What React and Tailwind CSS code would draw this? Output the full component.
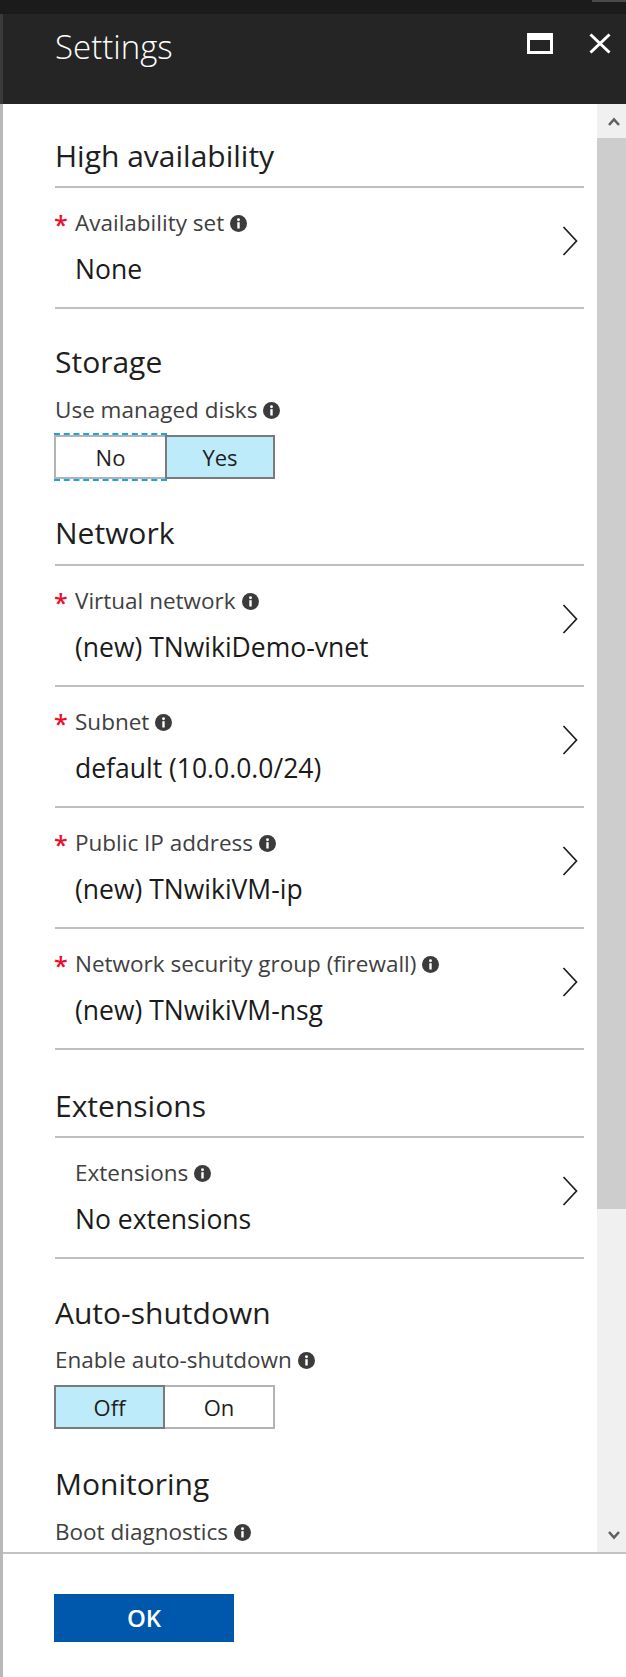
import React from "react";

function Info() {
  return (
    <svg width="17" height="17" viewBox="0 0 17 17" className="shrink-0 ml-[6px]">
      <circle cx="8.5" cy="8.5" r="8.5" fill="#3b3b3b" />
      <rect x="7.3" y="7.2" width="2.4" height="6.3" fill="#fff" />
      <circle cx="8.5" cy="4.7" r="1.45" fill="#fff" />
    </svg>
  );
}

function Chevron() {
  return (
    <svg width="16" height="30" viewBox="0 0 16 30">
      <polyline points="1.5,1 14.5,15 1.5,29" fill="none" stroke="#1e1e1e" strokeWidth="1.7" />
    </svg>
  );
}

function Line() {
  return <div className="h-[2px] bg-[#bfbfbf]" />;
}

function Heading({ children, mt }) {
  return (
    <div className={`h-[42px] leading-[42px] text-[30px] text-[#1e1e1e] whitespace-nowrap ${mt}`}>
      {children}
    </div>
  );
}

function Row({ required, label, value }) {
  return (
    <>
      <div className="h-[119px] flex">
        <div className="flex-1 pt-[21px]">
          <div className="flex items-center h-[28px]">
            <span className="w-[21px] -ml-[1px] self-start h-[28px] leading-[30px] text-[25px] font-semibold text-[#e8112d]">
              {required ? "*" : ""}
            </span>
            <span className="text-[22.5px] leading-[28px] text-[#404040] whitespace-nowrap">{label}</span>
            <Info />
          </div>
          <div className="mt-[15px] h-[34px] leading-[34px] pl-[20px] text-[26.5px] text-[#1a1a1a] whitespace-nowrap">
            {value}
          </div>
        </div>
        <div className="pt-[38px] pr-[6px]">
          <Chevron />
        </div>
      </div>
      <Line />
    </>
  );
}

function FieldLabel({ children, mt }) {
  return (
    <div className={`flex items-center h-[28px] ${mt}`}>
      <span className="text-[22.5px] leading-[28px] text-[#404040] whitespace-nowrap">{children}</span>
      <Info />
    </div>
  );
}

function ArrowGlyph({ up }) {
  return (
    <svg width="12" height="9" viewBox="0 0 12 9">
      <polyline
        points={up ? "1,8 6,2.5 11,8" : "1,1 6,6.5 11,1"}
        fill="none"
        stroke="#606060"
        strokeWidth="2.6"
      />
    </svg>
  );
}

export default function App() {
  return (
    <div className="w-[626px] h-[1677px] flex flex-col bg-white font-['Open_Sans',sans-serif] overflow-hidden">
      {/* top strip */}
      <div className="h-[14px] shrink-0 bg-[#1b1b1b] relative">
        <div className="absolute right-0 top-0 w-[34px] h-[2px] bg-[#4a4a4a]" />
      </div>

      {/* header */}
      <div className="h-[90px] shrink-0 flex bg-[#252525]">
        <div className="w-[3px] bg-[#3a3a3a]" />
        <div className="pl-[52px] pt-[12px]">
          <div className="h-[42px] leading-[42px] text-[33px] font-light text-white">Settings</div>
        </div>
        <div className="ml-auto mr-[15px] mt-[19px] flex items-start gap-[36px]">
          <div className="w-[26px] h-[21px] border-[3px] border-t-[7px] border-white" />
          <svg width="22" height="21" viewBox="0 0 22 21">
            <line x1="1.5" y1="1.5" x2="20.5" y2="19.5" stroke="#fff" strokeWidth="3" />
            <line x1="20.5" y1="1.5" x2="1.5" y2="19.5" stroke="#fff" strokeWidth="3" />
          </svg>
        </div>
      </div>

      {/* body */}
      <div className="h-[1448px] shrink-0 flex">
        <div className="w-[3px] bg-[#b9b9b9]" />
        <div className="flex-1 pl-[52px] pr-[13px] overflow-hidden">
          <Heading mt="mt-[31px]">High availability</Heading>
          <div className="mt-[9px]" />
          <Line />
          <Row required label="Availability set" value="None" />

          <Heading mt="mt-[32px]">Storage</Heading>
          <FieldLabel mt="mt-[13px]">Use managed disks</FieldLabel>
          <div className="flex mt-[11px] -ml-[1px] text-[22px] text-[#1e1e1e]">
            <div className="relative">
              <div className="w-[111px] h-[44px] border-2 border-r-0 border-[#b3b3b3] bg-white flex items-center justify-center">
                No
              </div>
              <div className="absolute left-0 -right-[2px] -top-[2px] border-t-2 border-dashed border-[#1fa3e0]" />
              <div className="absolute left-0 -right-[2px] -bottom-[2px] border-b-2 border-dashed border-[#1fa3e0]" />
            </div>
            <div className="w-[110px] h-[44px] border-2 border-[#7a7a7a] bg-[#bdebf9] flex items-center justify-center">
              Yes
            </div>
          </div>

          <Heading mt="mt-[33px]">Network</Heading>
          <div className="mt-[10px]" />
          <Line />
          <Row required label="Virtual network" value="(new) TNwikiDemo-vnet" />
          <Row required label="Subnet" value="default (10.0.0.0/24)" />
          <Row required label="Public IP address" value="(new) TNwikiVM-ip" />
          <Row required label="Network security group (firewall)" value="(new) TNwikiVM-nsg" />

          <Heading mt="mt-[35px]">Extensions</Heading>
          <div className="mt-[9px]" />
          <Line />
          <Row label="Extensions" value="No extensions" />

          <Heading mt="mt-[33px]">Auto-shutdown</Heading>
          <FieldLabel mt="mt-[12px]">Enable auto-shutdown</FieldLabel>
          <div className="flex mt-[11px] -ml-[1px] text-[22px] text-[#1e1e1e]">
            <div className="w-[111px] h-[44px] border-2 border-[#7a7a7a] bg-[#bdebf9] flex items-center justify-center">
              Off
            </div>
            <div className="w-[110px] h-[44px] border-2 border-l-0 border-[#b3b3b3] bg-white flex items-center justify-center">
              On
            </div>
          </div>

          <Heading mt="mt-[34px]">Monitoring</Heading>
          <FieldLabel mt="mt-[13px]">Boot diagnostics</FieldLabel>
        </div>

        {/* scrollbar */}
        <div className="w-[29px] flex flex-col">
          <div className="h-[34px] bg-[#f0f0f0] flex items-center justify-center pl-[4px]">
            <ArrowGlyph up />
          </div>
          <div className="h-[1071px] bg-[#cdcdcd]" />
          <div className="flex-1 bg-[#f0f0f0] flex flex-col justify-end items-center pl-[4px] pb-[12px]">
            <ArrowGlyph />
          </div>
        </div>
      </div>

      {/* footer */}
      <div className="flex flex-1">
        <div className="w-[3px] bg-[#b9b9b9]" />
        <div className="flex-1 border-t-2 border-[#c2c2c2] pl-[51px] pt-[40px]">
          <button className="w-[180px] h-[48px] bg-[#0058ad] text-white text-[24px] font-semibold">
            OK
          </button>
        </div>
      </div>
    </div>
  );
}
